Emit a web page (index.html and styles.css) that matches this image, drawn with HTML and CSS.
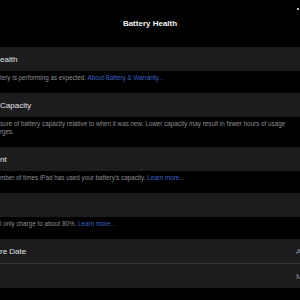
FILE: index.html
```html
<!DOCTYPE html>
<html>
<head>
<meta charset="utf-8">
<link rel="stylesheet" href="styles.css">
</head>
<body>
<header class="header">
  <div class="status"><span class="status-dot"></span></div>
  <h1 class="title">Battery Health</h1>
</header>
<main class="list">
  <div class="group"><div class="row"><span class="label">ealth</span></div></div>
  <p class="note">tery is performing as expected. <a class="link">About Battery &amp; Warranty...</a></p>

  <div class="group"><div class="row"><span class="label">Capacity</span></div></div>
  <p class="note">sure of battery capacity relative to when it was new. Lower capacity may result in fewer hours of usage<br>rges.</p>

  <div class="group"><div class="row"><span class="label">nt</span></div></div>
  <p class="note">mber of times iPad has used your battery’s capacity. <a class="link">Learn more...</a></p>

  <div class="group"><div class="row"><span class="label"></span></div></div>
  <p class="note">l only charge to about 80%. <a class="link">Learn more...</a></p>

  <div class="group">
    <div class="row"><span class="label">re Date</span><span class="value">April 2021</span></div>
    <div class="row row-sep"><span class="label"></span><span class="value">May 2021</span></div>
  </div>
</main>
</body>
</html>
```
FILE: styles.css
```css
html, body {
  margin: 0;
  padding: 0;
  background: #000;
  width: 300px;
  height: 300px;
  overflow: hidden;
  font-family: "Liberation Sans", Arial, sans-serif;
  color: #e8e8ea;
}

.header {
  width: 300px;
  height: 47px;
  display: flex;
  flex-direction: column;
}

.status {
  height: 18px;
  display: flex;
  justify-content: flex-end;
  align-items: flex-start;
}

.status-dot {
  width: 2px;
  height: 2px;
  margin-top: 8px;
  margin-right: 1px;
  background: #fff;
  border-radius: 1px;
}

.title {
  margin: 0;
  font-size: 8px;
  line-height: 12px;
  font-weight: 600;
  text-align: center;
  color: #f2f2f2;
}

.list {
  width: 350px;
}

.group {
  background: #1c1c1e;
}

.row {
  height: 24px;
  display: flex;
  align-items: center;
  justify-content: space-between;
  padding-right: 16px;
}

.row-sep {
  border-top: 1px solid #38383a;
}

.label {
  font-size: 8px;
  color: #e3e3e5;
}

.value {
  font-size: 8px;
  color: #8e8e93;
  width: 38px;
}

.note {
  margin: 0;
  padding: 3px 0 11px 0;
  font-size: 6.3px;
  line-height: 8px;
  color: #8e8e93;
  white-space: nowrap;
}

.link {
  color: #3a60c4;
}
```
